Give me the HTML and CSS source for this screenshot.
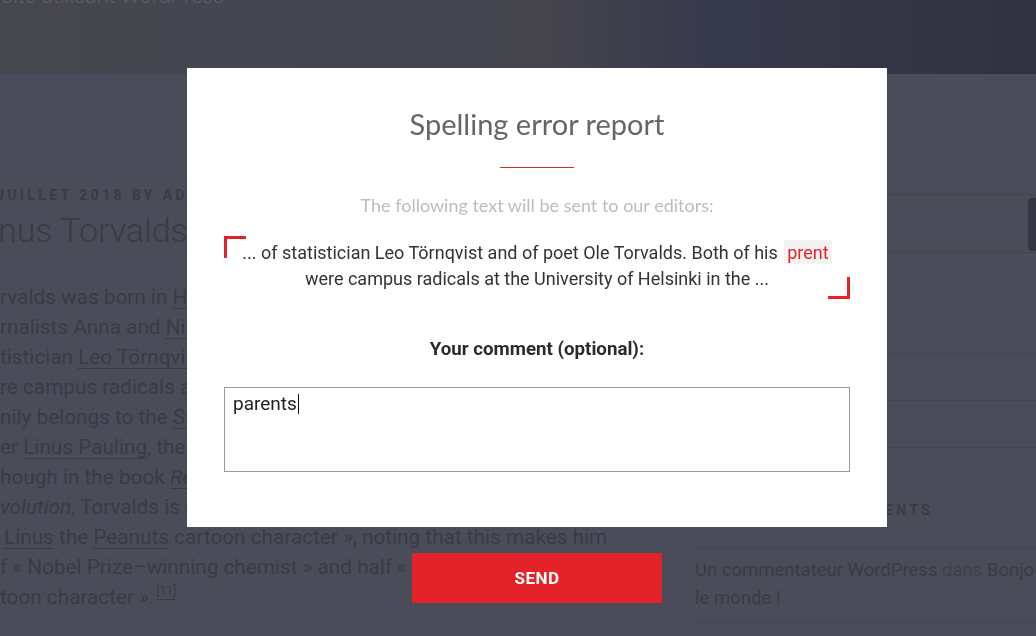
FILE: index.html
```html
<!DOCTYPE html>
<html lang="fr">
<head>
<meta charset="utf-8">
<title>Linus Torvalds – Spelling error report</title>
<link rel="stylesheet" href="styles.css">
</head>
<body>
<div class="page">
  <header class="site-header">
    <p class="site-description">site utilisant WordPress</p>
  </header>
  <div class="site-main">
    <main class="content">
      <div class="entry-meta">Juillet 2018 by admin</div>
      <h1 class="entry-title">nus Torvalds</h1>
      <div class="entry-content">
        <div class="line">rvalds was born in <a>Helsinki</a>, Finland, the son of</div>
        <div class="line">rnalists Anna and <a>Nils Torvalds</a>, the grandson of</div>
        <div class="line">tistician <a>Leo Törnqvist</a> and of poet Ole Torvalds. Both</div>
        <div class="line">re campus radicals at the University of Helsinki in the</div>
        <div class="line">nily belongs to the <a>Swedish-speaking minority</a> of Finland</div>
        <div class="line">er <a>Linus Pauling</a>, the American Nobel Prize–winning</div>
        <div class="line">hough in the book <a><i>Rebel Code: Linux and the Open</i></a></div>
        <div class="line"><i>volution</i>, Torvalds is quoted as saying he was named</div>
        <div class="line indent"><a>Linus</a> the <a>Peanuts</a> cartoon character », noting that this makes him</div>
        <div class="line">f « Nobel Prize–winning chemist » and half « blanket-carrying</div>
        <div class="line">toon character ».<sup><a>[11]</a></sup></div>
      </div>
    </main>
    <aside class="sidebar">
      <form class="search-form">
        <div class="search-field"></div>
        <span class="search-submit"></span>
      </form>
      <section class="widget widget-posts">
        <h2 class="widget-title">Articles</h2>
        <ul class="widget-list">
          <li>Linus</li>
          <li>Bonjour</li>
        </ul>
      </section>
      <section class="widget widget-comments">
        <h2 class="widget-title">Commentaires récents</h2>
        <ul class="widget-list">
          <li><a>Un commentateur WordPress</a> <span class="dim">dans</span> <a>Bonjour tout le monde !</a></li>
        </ul>
      </section>
    </aside>
  </div>
</div>

<div class="overlay">
  <div class="dialog">
    <div class="modal">
      <h3 class="modal-title">Spelling error report</h3>
      <div class="modal-rule"></div>
      <p class="modal-sub">The following text will be sent to our editors:</p>
      <div class="quote">
        <p>... of statistician Leo Törnqvist and of poet Ole Torvalds. Both of his <span class="typo">prent</span><br>were campus radicals at the University of Helsinki in the ...</p>
      </div>
      <div class="label">Your comment (optional):</div>
      <div class="comment-box">parents<span class="caret"></span></div>
    </div>
    <button class="send" type="button">Send</button>
  </div>
</div>
</body>
</html>
```

FILE: styles.css
```css
html, body {
  margin: 0;
  padding: 0;
}
body {
  width: 1036px;
  height: 636px;
  overflow: hidden;
  background: #4b4c5a;
  font-family: Roboto, "Liberation Sans", sans-serif;
  color: #3a3b47;
}
.page {
  width: 1036px;
  overflow: hidden;
}
.site-header {
  height: 74px;
  background: linear-gradient(90deg, #46464f 0%, #44454f 45%, #46454e 52%, #373a4b 68%, #30323f 100%);
  overflow: hidden;
}
.site-description {
  margin: -17px 0 0 2px;
  font-size: 21.5px;
  font-weight: 300;
  line-height: 26px;
  color: #5b5d69;
}
.site-main {
  display: flex;
}
.content {
  width: 640px;
  flex: none;
  padding-top: 111px;
}
.entry-meta {
  font-size: 14px;
  font-weight: 700;
  letter-spacing: 3.4px;
  text-transform: uppercase;
  line-height: 20px;
  margin-left: -4px;
  white-space: nowrap;
}
.entry-title {
  margin: 5px 0 0 -2px;
  font-size: 34px;
  font-weight: 300;
  line-height: 40px;
  white-space: nowrap;
}
.entry-content {
  margin-top: 32px;
  font-size: 20.75px;
  line-height: 30px;
}
.line {
  white-space: nowrap;
}
.line.indent {
  padding-left: 4px;
}
.entry-content a {
  text-decoration: underline;
  text-decoration-thickness: 1px;
  text-underline-offset: 4px;
}
.entry-content sup {
  font-size: 12px;
  line-height: 0;
  vertical-align: 9px;
  margin-left: 2px;
}
.sidebar {
  margin-left: 55px;
  width: 410px;
  flex: none;
  padding-top: 120px;
}
.search-form {
  position: relative;
  height: 59px;
}
.search-field {
  height: 57px;
  border-top: 1px solid #43444f;
  border-bottom: 1px solid #43444f;
}
.search-submit {
  position: absolute;
  left: 333px;
  top: 4px;
  width: 60px;
  height: 53px;
  border-radius: 4px;
  background: #353643;
}
.widget-title {
  margin: 0;
  font-size: 14px;
  font-weight: 700;
  letter-spacing: 3.3px;
  text-transform: uppercase;
  line-height: 20px;
}
.widget-posts {
  padding-top: 40px;
}
.widget-posts .widget-list {
  margin-top: 40px;
}
.widget-list {
  list-style: none;
  margin: 0;
  padding: 0;
  font-size: 18.5px;
  line-height: 28px;
}
.widget-list li {
  border-top: 1px solid #454653;
}
.widget-list li:last-child {
  border-bottom: 1px solid #454653;
}
.widget-posts li {
  height: 46px;
}
.widget-comments {
  padding-top: 52px;
}
.widget-comments .widget-list {
  margin-top: 27px;
}
.widget-comments li {
  padding: 8px 0 10px;
  border-bottom-color: #464754;
}
.dim {
  color: #3f404c;
}

/* ---------- modal ---------- */
.overlay {
  position: fixed;
  inset: 0;
  padding: 68px 0 0 187px;
}
.dialog {
  width: 700px;
  display: flex;
  flex-direction: column;
  align-items: center;
}
.modal {
  box-sizing: border-box;
  width: 700px;
  height: 459px;
  background: #fff;
  padding: 38px 37px 0;
  display: flex;
  flex-direction: column;
  align-items: center;
}
.modal-title {
  margin: 0;
  font-family: Lato, "Open Sans", sans-serif;
  font-weight: 400;
  font-size: 29px;
  line-height: 36px;
  color: #666;
}
.modal-rule {
  width: 74px;
  height: 1px;
  background: #c9302f;
  margin-top: 25px;
}
.modal-sub {
  margin: 25px 0 0;
  font-family: Lato, "Open Sans", sans-serif;
  font-size: 18px;
  line-height: 24px;
  color: #bdbdbd;
}
.quote {
  position: relative;
  align-self: stretch;
  margin-top: 19px;
  padding: 4px 0 7px;
  text-align: center;
}
.quote::before,
.quote::after {
  content: "";
  position: absolute;
  width: 19px;
  height: 19px;
  border: 0 solid #e3222a;
}
.quote::before {
  left: 0;
  top: 0;
  border-top-width: 3px;
  border-left-width: 3px;
}
.quote::after {
  right: 0;
  bottom: 0;
  border-bottom-width: 3px;
  border-right-width: 3px;
}
.quote p {
  margin: 0;
  font-size: 18px;
  line-height: 26px;
  color: #333;
}
.typo {
  background: #f3f3f3;
  color: #e3222a;
  padding: 2px 3px 1px;
  margin-left: 2px;
}
.label {
  margin-top: 38px;
  font-size: 18.7px;
  font-weight: 700;
  line-height: 24px;
  color: #2b2b2b;
}
.comment-box {
  box-sizing: border-box;
  align-self: stretch;
  margin-top: 26px;
  height: 85px;
  border: 1px solid #999;
  padding: 4px 8px;
  font-size: 19px;
  line-height: 24px;
  color: #222;
}
.caret {
  display: inline-block;
  width: 1px;
  height: 20px;
  background: #111;
  vertical-align: -4px;
  margin-left: 1px;
}
.send {
  margin-top: 26px;
  width: 250px;
  height: 50px;
  border: 0;
  background: #e3222a;
  color: #fff;
  font-family: Roboto, "Liberation Sans", sans-serif;
  font-size: 17px;
  font-weight: 700;
  text-transform: uppercase;
  letter-spacing: 0.5px;
  cursor: pointer;
}
```
